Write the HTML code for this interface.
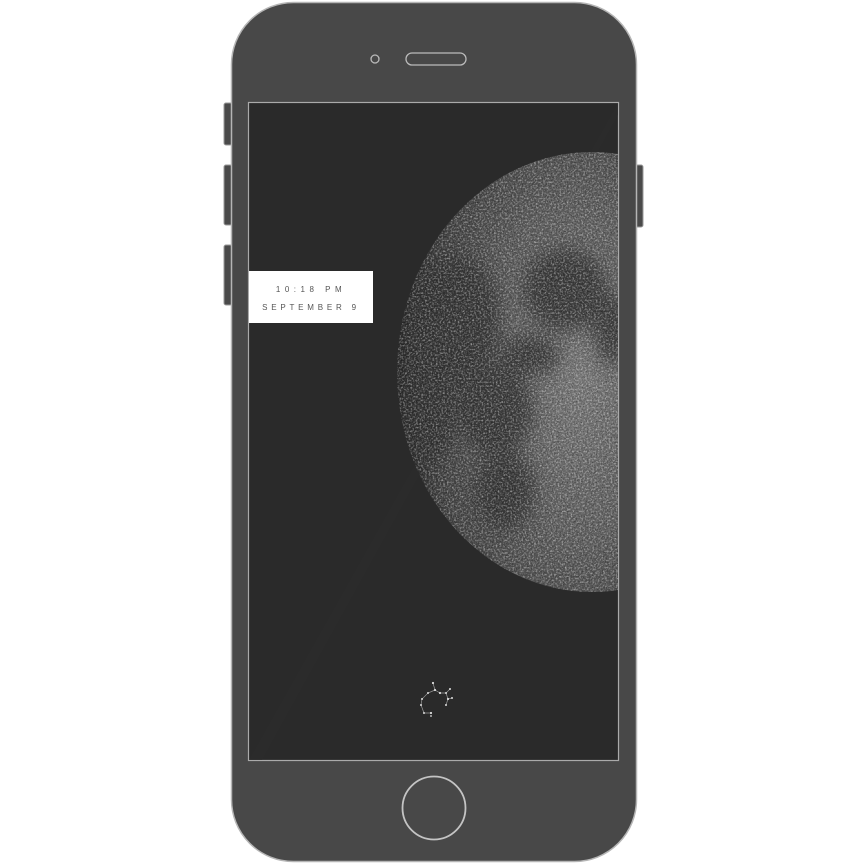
<!DOCTYPE html>
<html><head><meta charset="utf-8"><style>
html,body{margin:0;padding:0;background:#fff;width:868px;height:864px;overflow:hidden}
</style></head><body>
<svg width="868" height="864" viewBox="0 0 868 864" xmlns="http://www.w3.org/2000/svg">
<defs>
<radialGradient id="mg" cx="0.8" cy="0.5" r="0.75">
<stop offset="0" stop-color="#7a7a7a"/>
<stop offset="0.5" stop-color="#5e5e5e"/>
<stop offset="0.85" stop-color="#444"/>
<stop offset="1" stop-color="#2e2e2e"/>
</radialGradient>
<filter id="blur"><feGaussianBlur stdDeviation="9"/></filter>
<filter id="noise" x="0" y="0" width="100%" height="100%">
<feTurbulence type="fractalNoise" baseFrequency="0.55" numOctaves="3" seed="7"/>
<feColorMatrix type="matrix" values="0 0 0 0 1  0 0 0 0 1  0 0 0 0 1  0 0 0 2.2 -1.0"/>
</filter>
<filter id="noise2" x="0" y="0" width="100%" height="100%">
<feTurbulence type="fractalNoise" baseFrequency="0.8" numOctaves="2" seed="11"/>
<feColorMatrix type="matrix" values="0 0 0 0 0  0 0 0 0 0  0 0 0 0 0  0 0 0 2 -0.9"/>
</filter>
<clipPath id="scr"><rect x="249" y="103" width="369" height="657"/></clipPath>
<clipPath id="moon"><ellipse cx="592" cy="372" rx="195" ry="220"/></clipPath>
</defs>
<rect x="224" y="103" width="8" height="42" rx="2" fill="#4a4a4a" stroke="#999" stroke-width="1"/>
<rect x="224" y="165" width="8" height="60" rx="2" fill="#4a4a4a" stroke="#999" stroke-width="1"/>
<rect x="224" y="245" width="8" height="60" rx="2" fill="#4a4a4a" stroke="#999" stroke-width="1"/>
<rect x="635" y="165" width="8" height="62" rx="2" fill="#4a4a4a" stroke="#999" stroke-width="1"/>
<rect x="231.5" y="2.5" width="405" height="859" rx="62" fill="#484848" stroke="#b5b5b5" stroke-width="1.5"/>
<circle cx="375" cy="59" r="4" fill="none" stroke="#bbb" stroke-width="1.3"/>
<rect x="406" y="53" width="60" height="12" rx="6" fill="none" stroke="#bbb" stroke-width="1.3"/>
<circle cx="434" cy="808" r="31.5" fill="none" stroke="#c4c4c4" stroke-width="1.8"/>
<rect x="248.5" y="102.5" width="370" height="658" fill="#2a2a2a" stroke="#aaa" stroke-width="1.2"/>
<g clip-path="url(#scr)">
<polygon points="249,760 618,103 618,115 262,760" fill="#2d2d2d" opacity="0.6"/>
<g clip-path="url(#moon)">
<rect x="390" y="150" width="240" height="450" fill="url(#mg)"/>
<g filter="url(#blur)" fill="#333" opacity="0.8">
<ellipse cx="455" cy="320" rx="45" ry="65"/>
<ellipse cx="565" cy="290" rx="42" ry="42"/>
<ellipse cx="612" cy="330" rx="18" ry="35"/>
<ellipse cx="530" cy="355" rx="30" ry="20"/>
<ellipse cx="495" cy="410" rx="38" ry="45"/>
<ellipse cx="505" cy="490" rx="30" ry="40"/>
<ellipse cx="430" cy="400" rx="25" ry="70"/>
</g>
<rect x="390" y="150" width="240" height="450" filter="url(#noise2)" opacity="0.5"/>
<rect x="390" y="150" width="240" height="450" filter="url(#noise)" opacity="0.55"/>
</g>
</g>
<rect x="249" y="271" width="124" height="52" fill="#fff"/>
<text x="311" y="292" text-anchor="middle" font-family="Liberation Sans, sans-serif" font-size="8" letter-spacing="4.5" fill="#555">10:18 PM</text>
<text x="311" y="310" text-anchor="middle" font-family="Liberation Sans, sans-serif" font-size="8" letter-spacing="3.8" fill="#555">SEPTEMBER 9</text>
<g stroke="#999" stroke-width="0.7" fill="none">
<polyline points="433,683 435,690 428,693 422,699 421,705 424,713 431,713"/>
<polyline points="435,690 440,693 446,693 450,689"/>
<polyline points="446,693 448,699 446,705"/>
<polyline points="448,699 452,698"/>
</g>
<g fill="#ddd">
<circle cx="433" cy="683" r="1.1"/><circle cx="435" cy="690" r="1.1"/><circle cx="428" cy="693" r="1"/>
<circle cx="422" cy="699" r="1"/><circle cx="421" cy="705" r="1"/><circle cx="424" cy="713" r="1"/><circle cx="431" cy="713" r="1.1"/>
<circle cx="440" cy="693" r="1.1"/><circle cx="446" cy="693" r="1"/><circle cx="450" cy="689" r="1"/>
<circle cx="448" cy="699" r="1.1"/><circle cx="446" cy="705" r="1"/><circle cx="452" cy="698" r="1"/><circle cx="431" cy="716" r="0.9"/>
</g>
</svg>
</body></html>
